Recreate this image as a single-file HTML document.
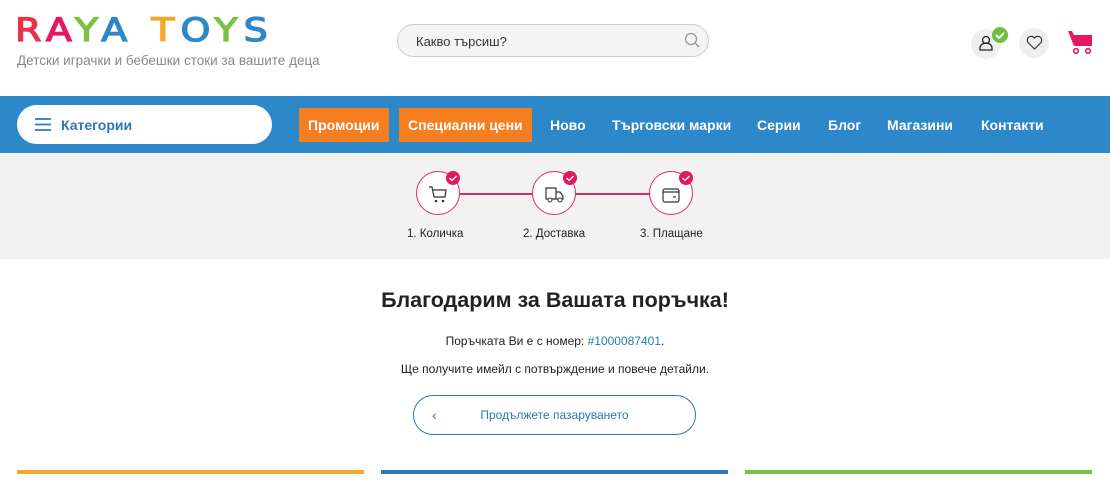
<!DOCTYPE html>
<html><head><meta charset="utf-8"><style>
body{margin:0;width:1110px;height:489px;overflow:hidden;background:#fff;font-family:"Liberation Sans","DejaVu Sans",sans-serif;position:relative}
.abs{position:absolute}
.logo{left:15px;top:13px;font-size:38px;font-weight:normal;letter-spacing:6px;line-height:40px;font-family:"DejaVu Sans","Liberation Sans",sans-serif;-webkit-text-stroke:1.5px currentColor;transform:scaleY(0.85);transform-origin:top left}
.tag{left:17px;top:53px;font-size:13.5px;color:#888}
.search{left:397px;top:24px;width:312px;height:33px;border:1px solid #ccc;border-radius:17px;background:#f4f4f4;box-sizing:border-box;font-size:13px;color:#333;padding:9px 0 0 18px}
.circ{width:30px;height:30px;border-radius:50%;background:#eee}
.nav{left:0;top:96px;width:1110px;height:57px;background:#2c88c8}
.cat{left:17px;top:105px;width:255px;height:39px;border-radius:20px;background:#fff;color:#2c78b8;font-weight:bold;font-size:14px}
.ni{top:108px;height:34px;line-height:34px;color:#fff;font-weight:bold;font-size:14px}
.or{background:#f57f20;padding:0 9px}
.steps{left:0;top:153px;width:1110px;height:106px;background:#f2f2f2}
.st{width:42px;height:42px;border:1.5px solid #e0286e;border-radius:50%;background:#fff;top:171px}
.ck{width:14px;height:14px;border-radius:50%;background:#e0185f;top:171px}
.lbl{top:228px;font-size:11.5px;color:#222}
.bar{top:470px;height:4px;width:347px}
</style></head><body>
<div class="abs logo"><span style="color:#e8334a">R</span><span style="color:#e8185f">A</span><span style="color:#7ac043">Y</span><span style="color:#2c88c8">A</span> <span style="color:#f5a623">T</span><span style="color:#2c88c8">O</span><span style="color:#7ac043">Y</span><span style="color:#2c88c8">S</span></div>
<div class="abs tag">Детски играчки и бебешки стоки за вашите деца</div>
<div class="abs search">Какво търсиш?</div>
<svg class="abs" style="left:684px;top:32px" width="16" height="16"><circle cx="7" cy="7" r="5.5" fill="none" stroke="#999" stroke-width="1.3"/><path d="M11 11l4 4" stroke="#999" stroke-width="1.3"/></svg>
<div class="abs circ" style="left:971px;top:29px"></div>
<svg class="abs" style="left:978px;top:35px" width="16" height="16"><circle cx="8" cy="5" r="3.5" fill="none" stroke="#222" stroke-width="1.3"/><path d="M2 15v-2a6 5 0 0 1 12 0v2z" fill="none" stroke="#222" stroke-width="1.3"/></svg>
<div class="abs" style="left:992px;top:27px;width:16px;height:16px;border-radius:50%;background:#6cbf3f"></div>
<svg class="abs" style="left:992px;top:27px" width="16" height="16"><path d="M4 8l3 3 5-5" fill="none" stroke="#fff" stroke-width="2"/></svg>
<div class="abs circ" style="left:1019px;top:28px"></div>
<svg class="abs" style="left:1026px;top:35px" width="17" height="16"><path d="M8.5 14L2 7.5A3.5 3.5 0 0 1 8.5 3 3.5 3.5 0 0 1 15 7.5z" fill="none" stroke="#333" stroke-width="1.2"/></svg>
<svg class="abs" style="left:1067px;top:30px" width="28" height="26"><path d="M1 1h4l2 4h18v11H7z" fill="#e8185f"/><circle cx="9" cy="21" r="2.3" fill="none" stroke="#e8185f" stroke-width="1.6"/><circle cx="21" cy="21" r="2.3" fill="none" stroke="#e8185f" stroke-width="1.6"/></svg>
<div class="abs nav"></div>
<div class="abs cat"><svg style="position:absolute;left:18px;top:13px" width="16" height="13"><path d="M0 1h16M0 6.5h16M0 12h16" stroke="#2c78b8" stroke-width="1.8"/></svg><span style="position:absolute;left:44px;top:12px">Категории</span></div>
<div class="abs ni or" style="left:299px">Промоции</div>
<div class="abs ni or" style="left:399px">Специални цени</div>
<div class="abs ni" style="left:550px">Ново</div>
<div class="abs ni" style="left:612px">Търговски марки</div>
<div class="abs ni" style="left:757px">Серии</div>
<div class="abs ni" style="left:828px">Блог</div>
<div class="abs ni" style="left:887px">Магазини</div>
<div class="abs ni" style="left:981px">Контакти</div>
<div class="abs steps"></div>
<div class="abs" style="left:460px;top:193px;width:190px;height:1.5px;background:#e0286e"></div>
<div class="abs st" style="left:416px"></div><div class="abs st" style="left:532px"></div><div class="abs st" style="left:649px"></div>
<div class="abs ck" style="left:446px"></div><div class="abs ck" style="left:563px"></div><div class="abs ck" style="left:679px"></div>
<svg class="abs" style="left:446px;top:171px" width="14" height="14"><path d="M3.5 7l2.5 2.5 4.5-4.5" fill="none" stroke="#fff" stroke-width="1.3"/></svg>
<svg class="abs" style="left:563px;top:171px" width="14" height="14"><path d="M3.5 7l2.5 2.5 4.5-4.5" fill="none" stroke="#fff" stroke-width="1.3"/></svg>
<svg class="abs" style="left:679px;top:171px" width="14" height="14"><path d="M3.5 7l2.5 2.5 4.5-4.5" fill="none" stroke="#fff" stroke-width="1.3"/></svg>
<svg class="abs" style="left:428px;top:185px" width="20" height="20"><path d="M1 2h3l2 10h11l1-7H5" fill="none" stroke="#333" stroke-width="1.2"/><circle cx="8" cy="16" r="1.3" fill="#333"/><circle cx="15" cy="16" r="1.3" fill="#333"/></svg>
<svg class="abs" style="left:544px;top:185px" width="22" height="20"><path d="M2 3h10v11H2zM12 7h4l3 4v3h-7" fill="none" stroke="#333" stroke-width="1.2"/><circle cx="6" cy="15" r="2" fill="#fff" stroke="#333"/><circle cx="16" cy="15" r="2" fill="#fff" stroke="#333"/></svg>
<svg class="abs" style="left:661px;top:185px" width="20" height="20"><rect x="2" y="4" width="16" height="13" rx="2" fill="none" stroke="#333" stroke-width="1.2"/><path d="M2 7h16M12 12h3" stroke="#333" stroke-width="1.2"/></svg>
<div class="abs lbl" style="left:407px">1. Количка</div>
<div class="abs lbl" style="left:523px">2. Доставка</div>
<div class="abs lbl" style="left:640px">3. Плащане</div>
<div class="abs" style="left:0;width:1110px;top:288px;text-align:center;font-size:21.5px;font-weight:bold;color:#222">Благодарим за Вашата поръчка!</div>
<div class="abs" style="left:0;width:1110px;top:334px;text-align:center;font-size:12px;color:#222">Поръчката Ви е с номер: <span style="color:#2c78b8">#1000087401</span>.</div>
<div class="abs" style="left:0;width:1110px;top:362px;text-align:center;font-size:12px;color:#222">Ще получите имейл с потвърждение и повече детайли.</div>
<div class="abs" style="left:413px;top:395px;width:283px;height:40px;border:1px solid #2c78b8;border-radius:20px;box-sizing:border-box;color:#2c78b8;font-size:12px;text-align:center;line-height:38px">Продължете пазаруването<span style="position:absolute;left:18px;font-size:14px">‹</span></div>
<div class="abs bar" style="left:17px;background:#f0a830"></div>
<div class="abs bar" style="left:381px;background:#2c78b8"></div>
<div class="abs bar" style="left:745px;background:#7ac043"></div>
</body></html>
